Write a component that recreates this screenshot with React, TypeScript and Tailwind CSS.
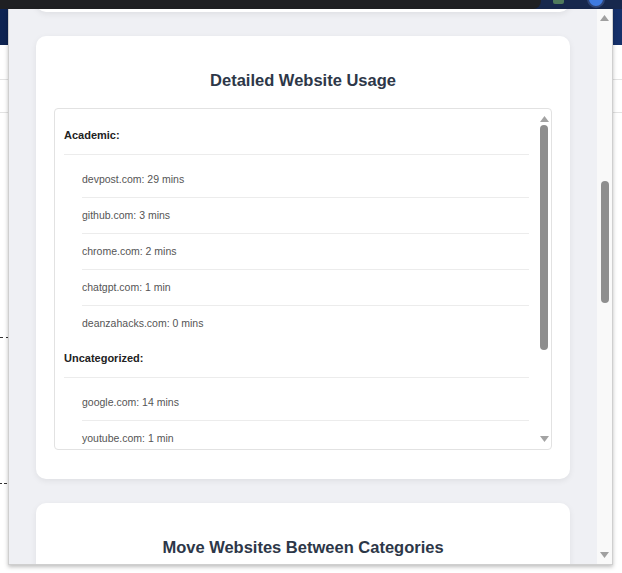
import React from "react";

const Up = ({ c = "#a3a3a3" }: { c?: string }) => (
  <svg width="9" height="6" viewBox="0 0 9 6"><polygon points="4.5,0 9,6 0,6" fill={c} /></svg>
);
const Down = ({ c = "#a3a3a3" }: { c?: string }) => (
  <svg width="9" height="6" viewBox="0 0 9 6"><polygon points="0,0 9,0 4.5,6" fill={c} /></svg>
);

const groups = [
  {
    name: "Academic:",
    items: [
      "devpost.com: 29 mins",
      "github.com: 3 mins",
      "chrome.com: 2 mins",
      "chatgpt.com: 1 min",
      "deanzahacks.com: 0 mins",
    ],
  },
  {
    name: "Uncategorized:",
    items: ["google.com: 14 mins", "youtube.com: 1 min"],
  },
];

export default function App() {
  return (
    <div
      className="relative w-[622px] h-[573px] overflow-hidden bg-white"
      style={{ fontFamily: '"Liberation Sans", Arial, sans-serif' }}
    >
      {/* browser toolbar strip */}
      <div className="flex h-[9px] w-full bg-[#17284d]">
        <div className="h-[9px] w-[541px] rounded-br-[8px] bg-[#1f2023]" />
        <div className="relative flex-1">
          <div className="absolute left-[12px] top-[-4px] h-[8px] w-[11px] rounded-[2px] bg-[#4f7a5c]" />
          <div className="absolute left-[46px] top-[-10px] h-[18px] w-[18px] rounded-full border-[2px] border-[#2f4576] bg-[#3f7be0]" />
        </div>
      </div>
      {/* page behind */}
      <div className="h-[36px] w-full bg-gradient-to-r from-[#0e2452] to-[#15306a]" />
      <div className="h-[35px] w-full border-b border-[#e3e3e3] bg-white" />
      <div className="h-[33px] w-full border-b border-[#e3e3e3] bg-white" />
      <div className="absolute left-0 top-[337px] flex gap-[3px]">
        <div className="h-[1px] w-[3px] bg-[#333]" />
        <div className="h-[1px] w-[2px] bg-[#333]" />
      </div>
      <div className="absolute left-0 top-[483px] flex gap-[2px]">
        <div className="h-[1px] w-[2px] bg-[#333]" />
        <div className="h-[1px] w-[3px] bg-[#333]" />
      </div>

      {/* popup */}
      <div className="absolute left-[8px] top-[9px] flex h-[556px] w-[605px] overflow-hidden border-r border-b border-l border-[#cfcfcf] bg-[#eff0f4] shadow-[0_2px_4px_rgba(0,0,0,0.25)]">
        <div className="flex flex-1 flex-col gap-[24px] overflow-hidden pl-[27px] pr-[27px]">
          <div className="-mt-[37px] h-[40px] shrink-0 rounded-[10px] bg-white shadow-[0_2px_6px_rgba(0,0,0,0.07)]" />
          {/* card 1 */}
          <div className="flex h-[443px] shrink-0 flex-col rounded-[10px] bg-white px-[18px] pt-[35px] pb-[29px] shadow-[0_2px_6px_rgba(0,0,0,0.07)]">
            <h2 className="text-center text-[16.5px] font-bold leading-[19px] text-[#2d3748]">
              Detailed Website Usage
            </h2>
            <div className="mt-[18px] flex h-[342px] overflow-hidden rounded-[4px] border border-[#e2e2e2]">
              <div className="flex-1 overflow-hidden pt-[10px] pl-[9px] pr-[8px]">
                {groups.map((g) => (
                  <div key={g.name} className="mt-[10px]">
                    <h3 className="border-b border-[#ececec] pb-[12px] text-[11px] font-bold leading-[13px] text-[#222]">
                      {g.name}
                    </h3>
                    <ul className="mt-[7px] ml-[18px]">
                      {g.items.map((it, i) => (
                        <li
                          key={it}
                          className={`flex h-[36px] items-center text-[10.5px] text-[#555] ${
                            i < g.items.length - 1 ? "border-b border-[#ececec]" : ""
                          }`}
                        >
                          {it}
                        </li>
                      ))}
                    </ul>
                  </div>
                ))}
              </div>
              <div className="flex w-[14px] shrink-0 flex-col items-center">
                <div className="mt-[4px] flex h-[11px] items-center justify-center">
                  <Up />
                </div>
                <div className="mt-[1px] h-[225px] w-[8px] rounded-full bg-[#8e8e8e]" />
                <div className="flex-1" />
                <div className="mb-[5px] flex h-[10px] items-center justify-center">
                  <Down />
                </div>
              </div>
            </div>
          </div>
          {/* card 2 */}
          <div className="h-[200px] shrink-0 rounded-[10px] bg-white px-[18px] pt-[35px] shadow-[0_2px_6px_rgba(0,0,0,0.07)]">
            <h2 className="text-center text-[16.5px] font-bold leading-[19px] text-[#2d3748]">
              Move Websites Between Categories
            </h2>
          </div>
        </div>
        {/* popup scrollbar */}
        <div className="flex w-[15px] shrink-0 flex-col items-center bg-[#f9f9f9]">
          <div className="mt-[6px] flex h-[6px] items-center justify-center">
            <Up c="#a0a0a0" />
          </div>
          <div className="mt-[160px] h-[122px] w-[8px] rounded-full bg-[#8e8e8e]" />
          <div className="flex-1" />
          <div className="mb-[6px] flex h-[6px] items-center justify-center">
            <Down c="#a0a0a0" />
          </div>
        </div>
      </div>
    </div>
  );
}
